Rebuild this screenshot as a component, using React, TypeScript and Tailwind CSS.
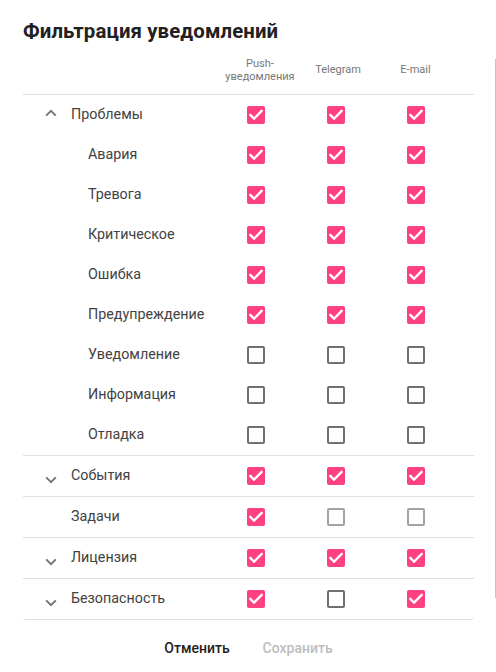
import React from "react";

type S = "on" | "off" | "dis";

const Box = ({ s }: { s: S }) => {
  if (s === "on")
    return (
      <svg width="24" height="24" viewBox="0 0 24 24" className="block">
        <path
          fill="#ff4081"
          d="M19 3H5c-1.11 0-2 .9-2 2v14c0 1.1.89 2 2 2h14c1.11 0 2-.9 2-2V5c0-1.1-.89-2-2-2zm-9 14l-5-5 1.41-1.41L10 14.17l7.59-7.59L19 8l-9 9z"
        />
        <path fill="#ffffff" d="M10 17l-5-5 1.41-1.41L10 14.17l7.59-7.59L19 8l-9 9z" />
      </svg>
    );
  return (
    <svg width="24" height="24" viewBox="0 0 24 24" className="block">
      <path
        fill={s === "dis" ? "#a3a3a3" : "#707070"}
        d="M19 5v14H5V5h14m0-2H5c-1.1 0-2 .9-2 2v14c0 1.1.9 2 2 2h14c1.1 0 2-.9 2-2V5c0-1.1-.9-2-2-2z"
      />
    </svg>
  );
};

const Chevron = ({ up }: { up?: boolean }) => (
  <svg width="12" height="8" viewBox="0 0 12 8" className="block">
    <path
      d={up ? "M1.2 6.6 6 1.8l4.8 4.8" : "M1.2 1.4 6 6.2l4.8-4.8"}
      fill="none"
      stroke="#767676"
      strokeWidth="2"
    />
  </svg>
);

const Row = ({
  label,
  states,
  chevron,
  sub,
}: {
  label: string;
  states: S[];
  chevron?: "up" | "down";
  sub?: boolean;
}) => (
  <div className="grid grid-cols-[193px_80px_80px_79px_1fr] items-center h-10">
    <div className="flex items-center h-10">
      {chevron === "up" && (
        <div className="w-[48px] pl-[22px] -mt-[5px]">
          <Chevron up />
        </div>
      )}
      {chevron === "down" && (
        <div className="w-[48px] pl-[22px] mt-[8px]">
          <Chevron />
        </div>
      )}
      {!chevron && <div className={sub ? "w-[65px]" : "w-[48px]"} />}
      <span className="text-[14.3px] text-[#424242]">{label}</span>
    </div>
    {states.map((s, i) => (
      <div key={i} className="flex justify-center">
        <Box s={s} />
      </div>
    ))}
    <div />
  </div>
);

export default function App() {
  const on: S[] = ["on", "on", "on"];
  const off: S[] = ["off", "off", "off"];
  return (
    <div
      className="relative w-[496px] h-[672px] bg-white overflow-hidden"
      style={{ fontFamily: "Roboto, 'Noto Sans', sans-serif" }}
    >
      <div className="absolute right-0 top-[59px] w-[1px] h-[539px] bg-[#c4c4c4]" />
      <div className="pl-[23px] pr-[22px] pt-[19px]">
        <h1 className="text-[20.4px] leading-[24px] font-bold text-[#212121] tracking-[0.1px]">
          Фильтрация уведомлений
        </h1>
        <div className="mt-1 grid grid-cols-[193px_80px_80px_79px_1fr] items-center h-[48px] border-b border-[#e0e0e0] text-[11px] leading-[13px] text-[#777777] text-center">
          <div />
          <div className="pl-[8px] -mt-[2px]">
            Push-
            <br />
            уведомления
          </div>
          <div className="pl-[4px] -mt-[2px]">Telegram</div>
          <div className="-mt-[2px]">E-mail</div>
          <div />
        </div>
        <div className="border-b border-[#e0e0e0]">
          <Row label="Проблемы" states={on} chevron="up" />
          <Row label="Авария" states={on} sub />
          <Row label="Тревога" states={on} sub />
          <Row label="Критическое" states={on} sub />
          <Row label="Ошибка" states={on} sub />
          <Row label="Предупреждение" states={on} sub />
          <Row label="Уведомление" states={off} sub />
          <Row label="Информация" states={off} sub />
          <Row label="Отладка" states={off} sub />
        </div>
        <div className="border-b border-[#e0e0e0]">
          <Row label="События" states={on} chevron="down" />
        </div>
        <div className="border-b border-[#e0e0e0]">
          <Row label="Задачи" states={["on", "dis", "dis"]} />
        </div>
        <div className="border-b border-[#e0e0e0]">
          <Row label="Лицензия" states={on} chevron="down" />
        </div>
        <div className="border-b border-[#e0e0e0] rounded-b-[4px]">
          <Row label="Безопасность" states={["on", "off", "on"]} chevron="down" />
        </div>
        <div className="flex justify-center gap-[33px] pt-[20px] text-[14px] font-medium leading-[16px]">
          <span className="text-[#212121]">Отменить</span>
          <span className="text-[#bdbdbd]">Сохранить</span>
        </div>
      </div>
    </div>
  );
}
